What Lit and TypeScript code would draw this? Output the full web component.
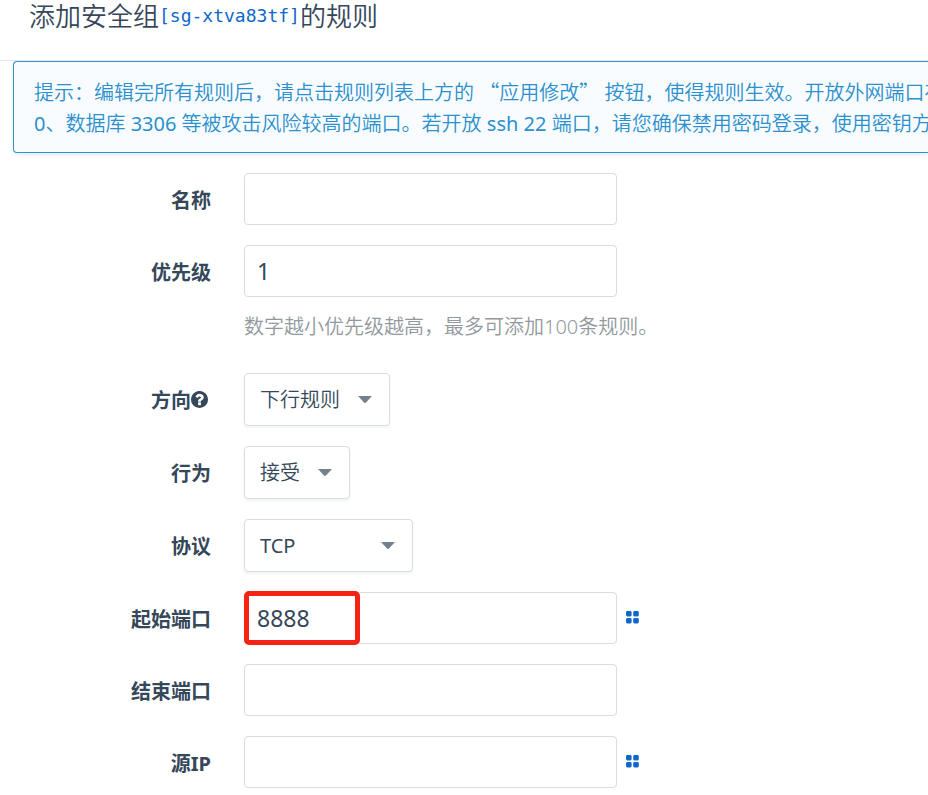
import { LitElement, html, css, svg, nothing } from "lit";
import { customElement } from "lit/decorators.js";

interface Field {
  id: string;
  label: string;
  kind: "text" | "select";
  value: string;
  hint?: string;
  help?: boolean;
  picker?: boolean;
  marked?: boolean;
  options?: string[];
  wide?: boolean;
}

const FIELDS: Field[] = [
  { id: "name", label: "名称", kind: "text", value: "" },
  {
    id: "priority",
    label: "优先级",
    kind: "text",
    value: "1",
    hint: "数字越小优先级越高，最多可添加100条规则。",
  },
  { id: "direction", label: "方向", kind: "select", value: "下行规则", options: ["下行规则"], help: true },
  { id: "action", label: "行为", kind: "select", value: "接受", options: ["接受"] },
  { id: "protocol", label: "协议", kind: "select", value: "TCP", options: ["TCP"], wide: true },
  { id: "port-start", label: "起始端口", kind: "text", value: "8888", picker: true, marked: true },
  { id: "port-end", label: "结束端口", kind: "text", value: "" },
  { id: "source-ip", label: "源IP", kind: "text", value: "", picker: true },
];

const questionIcon = svg`<svg class="question" viewBox="0 0 1536 1536" aria-hidden="true">
  <path fill="currentColor" d="M896 1248v-192q0-14-9-23t-23-9H672q-14 0-23 9t-9 23v192q0 14 9 23t23 9h192q14 0 23-9t9-23zm256-672q0-88-55.5-163T958 297t-170-41q-243 0-371 213-15 24 8 42l132 100q7 6 19 6 16 0 25-12 53-68 86-92 34-24 86-24 48 0 85.500 26t37.500 59q0 38-20 61t-68 45q-63 28-115.500 86.500T640 892v36q0 14 9 23t23 9h192q14 0 23-9t9-23q0-19 21.500-49.500T972 829q32-18 49-28.500t46-35 44.500-48 28-60.500 12.500-81zm384 192q0 209-103 385.500T1153.500 1433 768 1536t-385.500-103T103 1153.500 0 768t103-385.500T382.500 103 768 0t385.500 103T1433 382.500 1536 768z"/>
</svg>`;

const gridIcon = svg`<svg class="dots" viewBox="0 0 13 13" aria-hidden="true">
  <g fill="currentColor">
    <rect x="0" y="0" width="5.600" height="5.400" rx="1.400"/>
    <rect x="7.200" y="0" width="5.600" height="5.400" rx="1.400"/>
    <rect x="0" y="7" width="5.600" height="5.400" rx="1.400"/>
    <rect x="7.200" y="7" width="5.600" height="5.400" rx="1.400"/>
  </g>
</svg>`;

@customElement("app-root")
export class AppRoot extends LitElement {
  static styles = css`
    :host {
      display: block;
      overflow: hidden;
      background: #fff;
      color: #35475a;
      font-family: "Noto Sans", "Noto Sans CJK SC", sans-serif;
      font-size: 20px;
    }
    * {
      box-sizing: border-box;
    }
    .head {
      height: 61px;
      padding-left: 29px;
      border-bottom: 1px solid #e6e9eb;
    }
    .title {
      margin: 0;
      font-size: 26px;
      font-weight: 350;
      line-height: 32px;
      white-space: nowrap;
    }
    .group {
      color: #0d68cc;
      font-family: "DejaVu Sans Mono", monospace;
      font-size: 18px;
      font-weight: 400;
      line-height: 1;
      text-decoration: none;
      vertical-align: 4px;
    }
    .tip {
      height: 92px;
      margin-left: 13px;
      padding: 14px 0 0 20px;
      overflow: hidden;
      border: 1px solid #3390c8;
      border-right: 0;
      border-radius: 4px 0 0 4px;
      background: #f9fcff;
      box-shadow: 0 2px 4px #e3eff5;
      color: #2b90cd;
      font-weight: 350;
      line-height: 31px;
      white-space: nowrap;
    }
    .latin {
      font-weight: 400;
    }
    .quoted {
      font-family: "Noto Sans CJK SC", sans-serif;
    }
    .form {
      display: flex;
      flex-direction: column;
      gap: 20px;
      padding-top: 20px;
    }
    .row {
      display: grid;
      grid-template-columns: 211px minmax(0, 1fr);
      column-gap: 33px;
      align-items: start;
    }
    .label {
      display: flex;
      align-items: center;
      justify-content: flex-end;
      height: 52px;
      font-weight: 700;
    }
    .question {
      width: 17px;
      height: 17px;
      margin-right: 3px;
    }
    .line {
      display: flex;
      align-items: center;
      gap: 9px;
    }
    .box {
      position: relative;
      flex: 0 1 373px;
    }
    .input {
      display: block;
      width: 100%;
      height: 52px;
      padding: 0 12px;
      border: 1px solid #d9dddf;
      border-radius: 4px;
      background: #fff;
      color: inherit;
      font: inherit;
      font-size: 23px;
      outline: 0;
    }
    .mark {
      position: absolute;
      top: -1px;
      left: 0;
      width: 116px;
      height: 54px;
      border: 5px solid #f52216;
      border-radius: 5px;
      pointer-events: none;
    }
    .picker {
      display: block;
      padding: 0 0 2px;
      border: 0;
      background: none;
      color: #0d68cc;
      line-height: 0;
    }
    .dots {
      width: 13px;
      height: 13px;
    }
    .hint {
      margin: 0;
      padding: 14px 0 10px;
      color: #92999e;
      font-weight: 350;
      line-height: 32px;
    }
    .choice {
      display: inline-grid;
      align-items: center;
    }
    .select {
      grid-area: 1 / 1;
      height: 53px;
      padding: 0 49px 0 15px;
      appearance: none;
      border: 1px solid #d9dddf;
      border-radius: 4px;
      background: #fff;
      box-shadow: 0 2px 3px #f1f4f5;
      color: inherit;
      font: inherit;
      font-weight: 350;
    }
    .wide {
      min-width: 169px;
      font-weight: 400;
    }
    .arrow {
      grid-area: 1 / 1;
      justify-self: end;
      width: 14px;
      height: 7px;
      margin-right: 18px;
      color: #74808b;
      pointer-events: none;
    }
  `;

  private text(f: Field) {
    return html`<div class="line">
        <div class="box">
          <input class="input" id=${f.id} type="text" .value=${f.value} />
          ${f.marked ? html`<div class="mark"></div>` : nothing}
        </div>
        ${f.picker
          ? html`<button class="picker" type="button" aria-label="选择">${gridIcon}</button>`
          : nothing}
      </div>
      ${f.hint ? html`<p class="hint">${f.hint}</p>` : nothing}`;
  }

  private select(f: Field) {
    return html`<div class="line">
      <div class="choice">
        <select class="select ${f.wide ? "wide" : ""}" id=${f.id}>
          ${f.options?.map((o) => html`<option ?selected=${o === f.value}>${o}</option>`)}
        </select>
        <svg class="arrow" viewBox="0 0 14 7" aria-hidden="true">
          <path fill="currentColor" d="M0 0h14L8 6.500q-1 .8-2 0z" />
        </svg>
      </div>
    </div>`;
  }

  render() {
    return html`
      <header class="head">
        <h1 class="title">添加安全组<a class="group" href="#">[sg-xtva83tf]</a>的规则</h1>
      </header>
      <div class="tip" role="note">
        提示：编辑完所有规则后，请点击规则列表上方的 <span class="quoted" lang="zh-CN">“应用修改”</span> 按钮，使得规则生效。开放外网端口存<br /><span class="latin">0</span>、数据库 <span class="latin">3306</span> 等被攻击风险较高的端口。若开放 <span class="latin">ssh 22</span> 端口，请您确保禁用密码登录，使用密钥方
      </div>
      <form class="form">
        ${FIELDS.map(
          (f) => html`<div class="row">
            <label class="label" for=${f.id}>${f.label}${f.help ? questionIcon : nothing}</label>
            <div>${f.kind === "text" ? this.text(f) : this.select(f)}</div>
          </div>`,
        )}
      </form>
    `;
  }
}
